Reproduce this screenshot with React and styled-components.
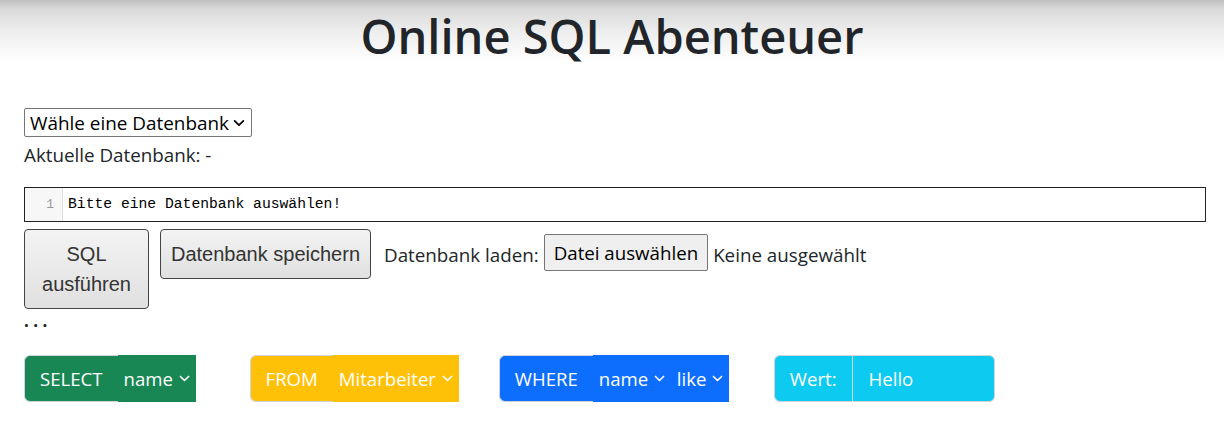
import React from 'react';
import styled, { createGlobalStyle } from 'styled-components';

const GlobalStyle = createGlobalStyle`
  html, body {
    margin: 0;
    padding: 0;
    background: #ffffff;
  }
  body {
    font-family: 'Open Sans', 'Noto Sans', sans-serif;
    font-size: 18.8px;
    color: #212529;
  }
`;

const chevron = (color) =>
  `url("data:image/svg+xml,%3csvg xmlns='http://www.w3.org/2000/svg' viewBox='0 0 16 16'%3e%3cpath fill='none' stroke='${color}' stroke-linecap='round' stroke-linejoin='round' stroke-width='2' d='m3 5.5 5 5 5-5'/%3e%3c/svg%3e")`;

const blocks = [
  { label: 'SELECT', color: '#198754', selects: ['name'], after: 54 },
  { label: 'FROM', color: '#ffc107', selects: ['Mitarbeiter'], after: 40 },
  { label: 'WHERE', color: '#0d6efd', selects: ['name', 'like'], after: 45 },
];

function App() {
  return (
    <>
      <GlobalStyle />
      <Header>
        <Title>Online SQL Abenteuer</Title>
      </Header>
      <Main>
        <DbSelect defaultValue=''>
          <option value=''>Wähle eine Datenbank</option>
        </DbSelect>
        <Current>Aktuelle Datenbank: -</Current>
        <Editor>
          <Gutter>1</Gutter>
          <Code>Bitte eine Datenbank auswählen!</Code>
        </Editor>
        <Actions>
          <GrayButton $width={125}>SQL ausführen</GrayButton>
          <GrayButton>Datenbank speichern</GrayButton>
          <LoadLabel>Datenbank laden:</LoadLabel>
          <FileButton>Datei auswählen</FileButton>
          <FileName>Keine ausgewählt</FileName>
        </Actions>
        <Dots>. . .</Dots>
        <Builder>
          {blocks.map((b) => (
            <Group key={b.label} $after={b.after}>
              <GroupLabel $bg={b.color}>{b.label}</GroupLabel>
              {b.selects.map((s, i) => (
                <GroupSelect key={`${b.label}-${i}`} $bg={b.color} defaultValue={s}>
                  <option value={s}>{s}</option>
                </GroupSelect>
              ))}
            </Group>
          ))}
          <Group>
            <GroupLabel $bg='#0dcaf0'>Wert:</GroupLabel>
            <ValueInput defaultValue='Hello' />
          </Group>
        </Builder>
      </Main>
    </>
  );
}

export default App;

const Header = styled.header`
  height: 62px;
  background: linear-gradient(to bottom, #bfbfbf 0%, #dadada 15%, #ededed 50%, #ffffff 100%);
  display: flex;
  justify-content: center;
  align-items: flex-start;
`;

const Title = styled.h1`
  margin: 0;
  padding-top: 6px;
  font-size: 47px;
  line-height: 60px;
  font-weight: 600;
  color: #212529;
  letter-spacing: 0;
`;

const Main = styled.main`
  padding: 46px 18px 0 24px;
`;

const DbSelect = styled.select`
  appearance: none;
  display: block;
  height: 29px;
  margin: 0;
  padding: 0 22px 0 5px;
  font-family: 'Open Sans', 'Noto Sans', sans-serif;
  font-size: 18.9px;
  color: #000;
  background: #fff ${chevron('%23000')} no-repeat right 5px center / 14px 14px;
  border: 1px solid #767676;
  border-radius: 2px;
`;

const Current = styled.div`
  margin-top: 6px;
  height: 24px;
  line-height: 24px;
`;

const Editor = styled.div`
  margin-top: 20px;
  height: 35px;
  border: 1px solid #222;
  box-sizing: border-box;
  display: flex;
  align-items: stretch;
`;

const Gutter = styled.div`
  width: 29px;
  padding-right: 8px;
  background: #f7f7f7;
  border-right: 1px solid #ddd;
  color: #999;
  text-align: right;
  font-family: 'Liberation Mono', 'DejaVu Sans Mono', monospace;
  font-size: 13px;
  line-height: 33px;
`;

const Code = styled.div`
  padding-left: 5px;
  font-family: 'Liberation Mono', 'DejaVu Sans Mono', monospace;
  font-size: 14.7px;
  line-height: 33px;
  color: #000;
`;

const Actions = styled.div`
  margin-top: 7px;
  display: flex;
  align-items: flex-start;
`;

const GrayButton = styled.button`
  width: ${(p) => (p.$width ? `${p.$width}px` : 'auto')};
  margin: 0 11px 0 0;
  padding: 9px 10px;
  font-family: 'Liberation Sans', Arial, sans-serif;
  font-size: 20px;
  line-height: 30px;
  color: #333;
  background: linear-gradient(to bottom, #f3f3f3, #e0e0e0);
  border: 1px solid #444;
  border-radius: 4px;
  text-align: center;
`;

const LoadLabel = styled.span`
  margin: 13px 5px 0 2px;
  line-height: 26px;
`;

const FileButton = styled.button`
  margin-top: 5px;
  height: 37px;
  padding: 0 9px;
  font-family: 'Open Sans', 'Noto Sans', sans-serif;
  font-size: 18.7px;
  color: #000;
  background: #efefef;
  border: 1px solid #767676;
  border-radius: 2px;
`;

const FileName = styled.span`
  margin: 13px 0 0 5px;
  line-height: 26px;
`;

const Dots = styled.div`
  margin-top: 4px;
  height: 20px;
  line-height: 16px;
  font-size: 17px;
  font-weight: 700;
`;

const Builder = styled.div`
  margin-top: 22px;
  display: flex;
  align-items: stretch;
`;

const Group = styled.div`
  display: flex;
  height: 47px;
  margin-right: ${(p) => p.$after || 0}px;
`;

const GroupLabel = styled.span`
  display: flex;
  align-items: center;
  padding: 0 15px;
  font-size: 18.6px;
  color: #fff;
  background: ${(p) => p.$bg};
  border: 1px solid #ced4da;
  border-right: none;
  border-radius: 6px 0 0 6px;
`;

const GroupSelect = styled.select`
  appearance: none;
  height: 47px;
  margin: 0;
  padding: 0 22px 0 6px;
  font-family: 'Open Sans', 'Noto Sans', sans-serif;
  font-size: 18.6px;
  color: #fff;
  background: ${(p) => p.$bg} ${chevron('%23fff')} no-repeat right 5px center / 13px 13px;
  border: none;
  border-radius: 0;
  outline: none;
`;

const ValueInput = styled.input`
  width: 143px;
  box-sizing: border-box;
  height: 47px;
  margin: 0;
  padding: 0 16px;
  font-family: 'Open Sans', 'Noto Sans', sans-serif;
  font-size: 18.6px;
  color: #fff;
  background: #0dcaf0;
  border: 1px solid #ced4da;
  border-radius: 0 6px 6px 0;
  outline: none;
`;
